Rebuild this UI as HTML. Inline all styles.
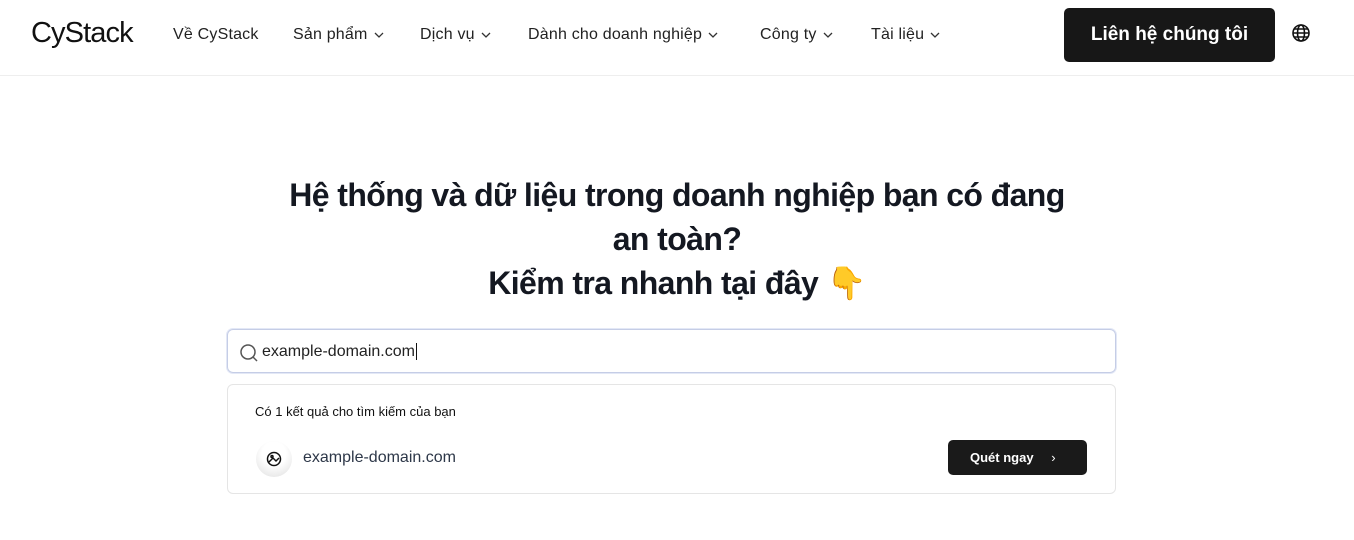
<!DOCTYPE html>
<html><head><meta charset="utf-8"><style>
*{box-sizing:border-box;margin:0;padding:0}
body{width:1354px;height:540px;background:#fff;font-family:"Liberation Sans",sans-serif;color:#111;position:relative;overflow:hidden}
.nav{position:absolute;left:0;top:0;width:1354px;height:76px;border-bottom:1px solid #eee}
.logo{position:absolute;left:31px;top:17px;font-size:29px;letter-spacing:-0.9px;color:#111;font-weight:400}
.ni{position:absolute;top:26px;font-size:16px;color:#222;letter-spacing:0.2px}
.ni svg{vertical-align:middle;margin-left:6px}
.cta{position:absolute;left:1064px;top:8px;width:211px;height:54px;background:#171717;border-radius:5px;color:#fff;font-size:19px;font-weight:bold;text-align:center;line-height:54px}
h1{position:absolute;left:0;width:1354px;top:173px;text-align:center;font-size:32px;line-height:44px;font-weight:bold;color:#141821;letter-spacing:-0.6px}
.search{position:absolute;left:227px;top:329px;width:889px;height:44px;border:1px solid #c5cde6;border-radius:6px;box-shadow:0 0 0 1px #e3e8f6}
.search span{position:absolute;left:34px;top:13px;font-size:16px;color:#222}
.res{position:absolute;left:227px;top:384px;width:889px;height:110px;border:1px solid #e5e5e5;border-radius:6px}
.res .t{position:absolute;left:27px;top:19px;font-size:13px;color:#111}
.av{position:absolute;left:28px;top:56px;width:36px;height:36px;border-radius:50%;background:radial-gradient(circle at 50% 35%,#fff 40%,#ddd 100%)}
.res .d{position:absolute;left:75px;top:64px;font-size:16px;color:#2d3748}
.btn{position:absolute;left:720px;top:55px;width:139px;height:35px;background:#1a1a1a;border-radius:5px;color:#fff;font-size:13px;font-weight:bold;line-height:35px;padding-left:22px}
</style></head><body>
<div class="nav">
<div class="logo">CyStack</div>
<div class="ni" style="left:173px">Về CyStack</div>
<div class="ni" style="left:293px">Sản phẩm<svg width="10" height="6"><path d="M1 1l4 4 4-4" stroke="#333" fill="none" stroke-width="1.3"/></svg></div>
<div class="ni" style="left:420px">Dịch vụ<svg width="10" height="6"><path d="M1 1l4 4 4-4" stroke="#333" fill="none" stroke-width="1.3"/></svg></div>
<div class="ni" style="left:528px">Dành cho doanh nghiệp<svg width="10" height="6"><path d="M1 1l4 4 4-4" stroke="#333" fill="none" stroke-width="1.3"/></svg></div>
<div class="ni" style="left:760px">Công ty<svg width="10" height="6"><path d="M1 1l4 4 4-4" stroke="#333" fill="none" stroke-width="1.3"/></svg></div>
<div class="ni" style="left:871px">Tài liệu<svg width="10" height="6"><path d="M1 1l4 4 4-4" stroke="#333" fill="none" stroke-width="1.3"/></svg></div>
<div class="cta">Liên hệ chúng tôi</div>
<svg style="position:absolute;left:1291px;top:23px" width="20" height="20" viewBox="0 0 20 20" fill="none" stroke="#111" stroke-width="1.6"><circle cx="10" cy="10" r="8"/><ellipse cx="10" cy="10" rx="3.5" ry="8"/><path d="M2 10h16M3.5 6h13M3.5 14h13"/></svg>
</div>
<h1>Hệ thống và dữ liệu trong doanh nghiệp bạn có đang<br>an toàn?<br>Kiểm tra nhanh tại đây 👇</h1>
<div class="search">
<svg style="position:absolute;left:11px;top:13px" width="20" height="20" viewBox="0 0 20 20" fill="none" stroke="#555" stroke-width="1.5"><circle cx="9" cy="9" r="7"/><path d="M14 14l4 4"/></svg>
<span>example-domain.com<span style="position:static;border-left:1px solid #111;margin-left:1px"></span></span>
</div>
<div class="res">
<div class="t">Có 1 kết quả cho tìm kiếm của bạn</div>
<div class="av"><svg style="position:absolute;left:10px;top:10px" width="16" height="16" viewBox="0 0 16 16" fill="none" stroke="#111" stroke-width="1.5"><circle cx="8" cy="8" r="6.5"/><path d="M3 11l4-4 3 3 3-3"/><circle cx="6" cy="5.5" r="1"/></svg></div>
<div class="d">example-domain.com</div>
<div class="btn">Quét ngay <span style="margin-left:14px;font-weight:normal">›</span></div>
</div>
</body></html>
